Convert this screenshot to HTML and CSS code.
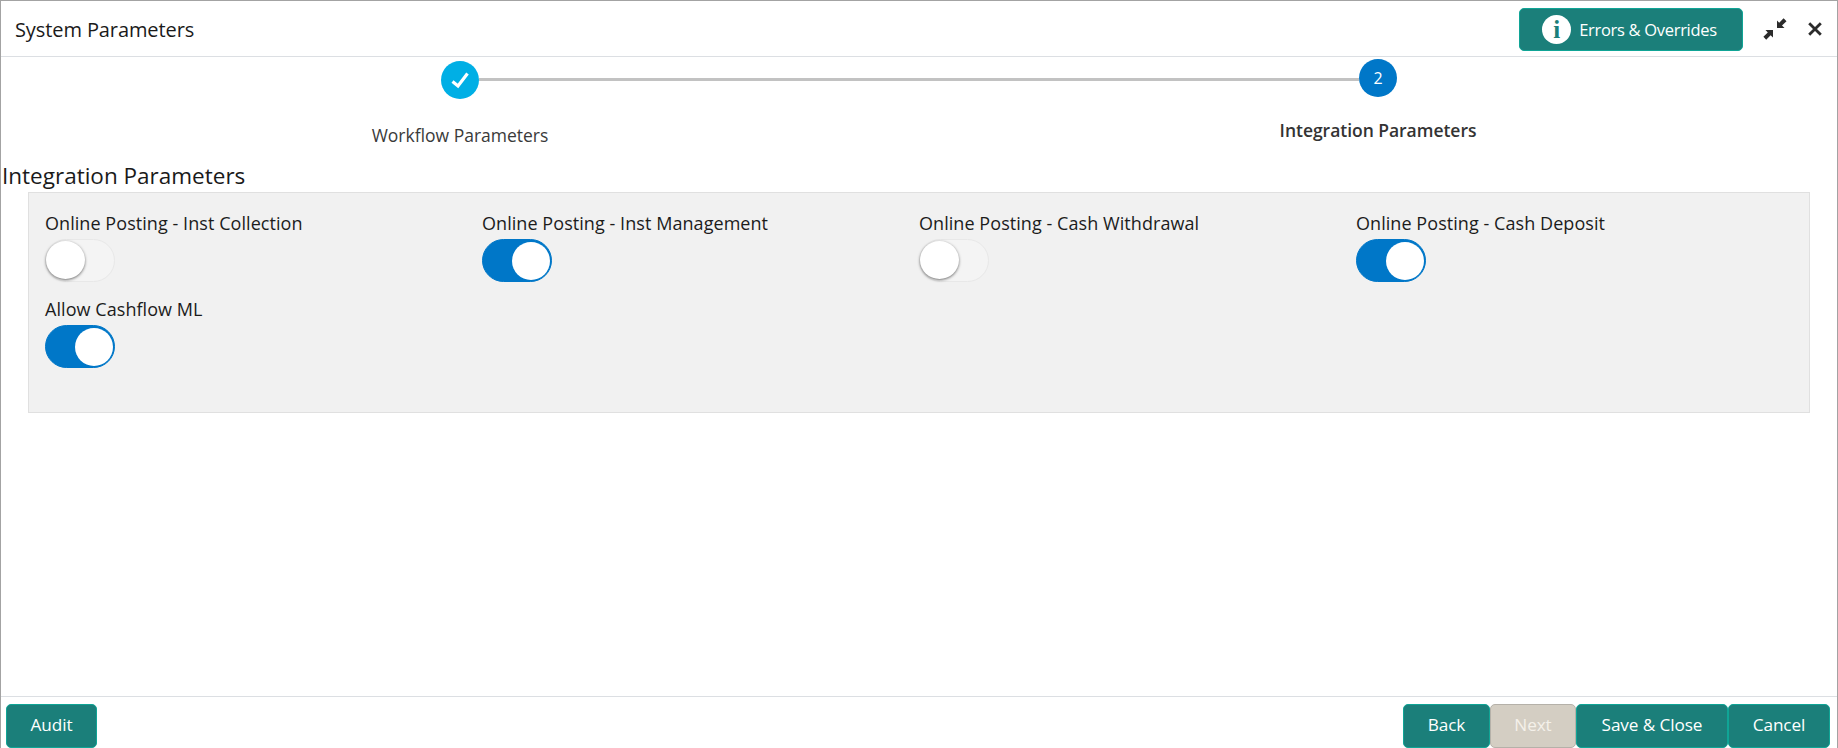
FILE: index.html
```html
<!DOCTYPE html>
<html lang="en">
<head>
<meta charset="utf-8">
<title>System Parameters</title>
<link rel="stylesheet" href="styles.css">
</head>
<body>
<div class="window">
  <header class="header">
    <h1 class="title">System Parameters</h1>
    <div class="header-actions">
      <button class="btn btn-errors" type="button">
        <span class="info-icon">i</span>
        <span>Errors &amp; Overrides</span>
      </button>
      <svg class="icon-min" width="24" height="24" viewBox="0 0 24 24" aria-hidden="true">
        <path d="M14 3.5 L14 11 L21.5 11 L19 8.6 L23.5 4.2 L20.6 1.2 L16.2 5.7 Z" fill="#2b2b2b"/>
        <path d="M10 13 L10 20.5 L7.6 18.2 L3.2 22.8 L0.4 19.8 L4.8 15.4 L2.5 13 Z" fill="#2b2b2b"/>
      </svg>
      <svg class="icon-close" width="16" height="16" viewBox="0 0 16 16" aria-hidden="true">
        <path d="M2.2 2.2 L13.8 13.8 M13.8 2.2 L2.2 13.8" stroke="#2b2b2b" stroke-width="2.8" fill="none"/>
      </svg>
    </div>
  </header>

  <div class="stepper">
    <div class="step step-one">
      <span class="dot dot-done">
        <svg width="20" height="20" viewBox="0 0 20 20" aria-hidden="true">
          <path d="M2.5 11.5 L8 16 L17.5 3.5" stroke="#fff" stroke-width="3.2" fill="none"/>
        </svg>
      </span>
      <span class="step-label">Workflow Parameters</span>
    </div>
    <div class="step-line"></div>
    <div class="step step-two">
      <span class="dot dot-active">2</span>
      <span class="step-label step-label-active">Integration Parameters</span>
    </div>
  </div>

  <main class="content">
    <h2 class="section-title">Integration Parameters</h2>
    <section class="panel">
      <div class="field">
        <div class="field-label">Online Posting - Inst Collection</div>
        <span class="toggle"><span class="knob"></span></span>
      </div>
      <div class="field">
        <div class="field-label">Online Posting - Inst Management</div>
        <span class="toggle on"><span class="knob"></span></span>
      </div>
      <div class="field">
        <div class="field-label">Online Posting - Cash Withdrawal</div>
        <span class="toggle"><span class="knob"></span></span>
      </div>
      <div class="field">
        <div class="field-label">Online Posting - Cash Deposit</div>
        <span class="toggle on"><span class="knob"></span></span>
      </div>
      <div class="field">
        <div class="field-label">Allow Cashflow ML</div>
        <span class="toggle on"><span class="knob"></span></span>
      </div>
    </section>
  </main>

  <footer class="footer">
    <button class="btn btn-audit" type="button">Audit</button>
    <div class="footer-actions">
      <button class="btn btn-back" type="button">Back</button>
      <button class="btn btn-next" type="button" disabled>Next</button>
      <button class="btn btn-save" type="button">Save &amp; Close</button>
      <button class="btn btn-cancel" type="button">Cancel</button>
    </div>
  </footer>
</div>
</body>
</html>
```

FILE: styles.css
```css
* { box-sizing: border-box; }
html, body { margin: 0; padding: 0; background: #fff; }
body { font-family: "Open Sans", "Noto Sans", sans-serif; color: #1c1c1c; }

.window {
  width: 1838px;
  height: 748px;
  display: flex;
  flex-direction: column;
  border: 1px solid #a3a3a3;
  border-bottom: 0;
  overflow: hidden;
}

.header {
  height: 56px;
  flex: none;
  display: flex;
  align-items: center;
  justify-content: space-between;
  border-bottom: 1px solid #dcdfe3;
  padding: 0 12px 0 14px;
}
.title { margin: 2px 0 0; font-size: 20px; font-weight: 400; color: #1a1a1a; letter-spacing: -0.1px; }
.header-actions { display: flex; align-items: center; }

.btn {
  font-family: inherit;
  font-size: 17.2px;
  letter-spacing: -0.1px;
  line-height: 38px;
  color: #fff;
  background: #1b7f7a;
  border: 1px solid #10a596;
  border-radius: 5px;
  padding: 0 0 2px;
  height: 44px;
}
.btn-errors {
  width: 224px;
  height: 43px;
  display: flex;
  align-items: center;
  justify-content: center;
  gap: 8px;
  margin-right: 20px;
  margin-top: 2px;
  padding: 0 3px 0 0;
  font-size: 16.5px;
  letter-spacing: -0.3px;
}
.info-icon {
  width: 29px;
  height: 29px;
  border-radius: 50%;
  background: #fff;
  color: #1b7f7a;
  font-family: "Liberation Serif", serif;
  font-weight: 700;
  font-size: 25px;
  line-height: 29px;
  text-align: center;
}
.icon-min { margin-right: 20px; }
.icon-close { margin-right: 2px; }

.stepper {
  flex: none;
  height: 82px;
  display: flex;
  align-items: flex-start;
  padding-left: 440px;
}
.step { width: 38px; display: flex; flex-direction: column; align-items: center; position: relative; }
.step-one { padding-top: 4px; }
.step-two { padding-top: 2px; }
.dot {
  width: 38px;
  height: 38px;
  flex: none;
  border-radius: 50%;
  display: flex;
  align-items: center;
  justify-content: center;
  color: #fff;
  font-size: 16px;
}
.dot-done { background: #00afe5; }
.dot-active { background: #0077c8; }
.step-line { width: 880px; height: 3px; margin-top: 21px; background: #c2c2c2; flex: none; }
.step-label { white-space: nowrap; font-size: 17.5px; color: #3a3a3a; letter-spacing: 0; line-height: 24px; }
.step-one .step-label { margin-top: 24px; }
.step-two .step-label { margin-top: 21px; }
.step-label-active { font-weight: 600; letter-spacing: -0.03px; color: #333; }

.content { flex: 1; min-height: 0; }
.section-title {
  margin: 0;
  padding-left: 1px;
  height: 53px;
  padding-top: 22px;
  font-size: 22.5px;
  line-height: 30px;
  font-weight: 400;
  color: #1a1a1a;
  letter-spacing: 0;
}
.panel {
  margin-left: 27px;
  width: 1782px;
  height: 221px;
  background: #f1f1f1;
  border: 1px solid #e0e0e0;
  padding: 18px 0 0 16px;
  display: grid;
  grid-template-columns: repeat(4, 437px);
  grid-auto-rows: 86px;
}
.field-label {
  font-size: 18px;
  line-height: 24px;
  letter-spacing: 0.06px;
  color: #1c1c1c;
  white-space: nowrap;
}
.toggle {
  display: block;
  position: relative;
  width: 70px;
  height: 43px;
  margin-top: 4px;
  border-radius: 22px;
  background: #f4f4f4;
  border: 1px solid #e8e8e8;
}
.knob {
  position: absolute;
  left: 0;
  top: 1px;
  width: 39px;
  height: 38px;
  border-radius: 50%;
  background: #fff;
  box-shadow: 0 1px 3px rgba(0, 0, 0, 0.55);
}
.toggle.on { background: #0077c8; border-color: #0077c8; }
.toggle.on .knob { left: 29px; top: 2px; width: 38px; box-shadow: none; }

.footer {
  flex: none;
  height: 52px;
  border-top: 1px solid #dcdfe3;
  padding: 7px 7px 0 5px;
  display: flex;
  justify-content: space-between;
  align-items: flex-start;
}
.btn-audit { width: 91px; }
.footer-actions { display: flex; }
.btn-back { width: 87px; }
.btn-next { width: 86px; background: #d4cec3; border-color: #b5b1a9; color: #f4f1ea; }
.btn-save { width: 152px; }
.btn-cancel { width: 102px; }
```
